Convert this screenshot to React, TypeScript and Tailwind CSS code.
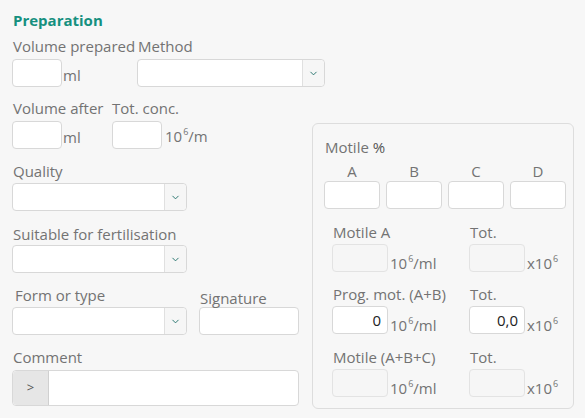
import { ChevronDown } from 'lucide-react'

const font = { fontFamily: '"Open Sans", "Liberation Sans", sans-serif' }

function TextInput({ className = '', value = '', disabled = false }: { className?: string; value?: string; disabled?: boolean }) {
  return (
    <div
      className={`h-[28px] rounded-[4px] border flex items-center justify-end pr-[6px] text-[15px] text-[#222] ${
        disabled ? 'bg-[#f6f6f6] border-[#e3e3e3]' : 'bg-white border-[#d8d8d8]'
      } ${className}`}
    >
      {value}
    </div>
  )
}

function Select({ className = '' }: { className?: string }) {
  return (
    <div className={`h-[28px] rounded-[4px] border border-[#d8d8d8] bg-white flex ${className}`}>
      <div className="flex-1" />
      <div className="w-[22px] border-l border-[#e0e0e0] bg-[#f6f6f6] rounded-r-[4px] flex items-center justify-center">
        <ChevronDown className="w-[11px] h-[11px] text-[#1f6f68]" strokeWidth={2} />
      </div>
    </div>
  )
}

function Label({ children, className = '' }: { children: React.ReactNode; className?: string }) {
  return <div className={`text-[15px] leading-[20px] text-[#737373] ${className}`}>{children}</div>
}

function Six() {
  return <sup className="text-[9px] relative top-[-7px] ml-[1px]">6</sup>
}

function CalcRow({ label, left = '', right = '', disabled = true, mt }: { label: string; left?: string; right?: string; disabled?: boolean; mt: string }) {
  return (
    <div className={`flex ${mt}`}>
      <div className="w-[156px] pl-[19px]">
        <Label className="pl-[1px]">{label}</Label>
        <div className="flex items-end mt-[2px]">
          <TextInput className="w-[56px]" value={left} disabled={disabled} />
          <span className="text-[15px] leading-[20px] text-[#737373] ml-[2px] mb-[-1px]">
            10<Six />/ml
          </span>
        </div>
      </div>
      <div>
        <Label className="ml-[1px]">Tot.</Label>
        <div className="flex items-end mt-[2px]">
          <TextInput className="w-[56px]" value={right} disabled={disabled} />
          <span className="text-[15px] leading-[20px] text-[#737373] ml-[2px] mb-[-1px]">
            x10<Six />
          </span>
        </div>
      </div>
    </div>
  )
}

export default function App() {
  return (
    <div className="w-[585px] h-[418px] bg-[#f7f7f7] pl-[12px] overflow-hidden" style={font}>
      <div className="pt-[10px] pl-[1px] text-[15px] leading-[20px] font-bold text-[#16907f]">Preparation</div>

      {/* volume + method */}
      <div className="flex mt-[6px]">
        <div className="w-[125px]">
          <Label className="pl-[1px] whitespace-nowrap">Volume prepared</Label>
          <div className="flex items-center mt-[3px]">
            <TextInput className="w-[50px]" />
            <span className="text-[15px] leading-[20px] text-[#737373] ml-[1px] mt-[3px]">ml</span>
          </div>
        </div>
        <div>
          <Label className="pl-[1px]">Method</Label>
          <Select className="w-[188px] mt-[3px]" />
        </div>
      </div>

      <div className="flex mt-[11px]">
        {/* left column */}
        <div className="w-[300px]">
          <div className="flex">
            <div className="w-[100px]">
              <Label className="pl-[1px]">Volume after</Label>
              <div className="flex items-center mt-[3px]">
                <TextInput className="w-[50px]" />
                <span className="text-[15px] leading-[20px] text-[#737373] ml-[1px] mt-[3px]">ml</span>
              </div>
            </div>
            <div>
              <Label>Tot. conc.</Label>
              <div className="flex items-center mt-[3px]">
                <TextInput className="w-[50px]" />
                <span className="text-[15px] leading-[20px] text-[#737373] ml-[3px] mt-[1px]">
                  10<Six />/m
                </span>
              </div>
            </div>
          </div>

          <Label className="mt-[12px] pl-[1px]">Quality</Label>
          <Select className="w-[175px] mt-[2px]" />

          <Label className="mt-[13px] pl-[1px]">Suitable for fertilisation</Label>
          <Select className="w-[175px] mt-[1px]" />

          <div className="flex mt-[12px]">
            <div className="w-[187px]">
              <Label className="pl-[3px]">Form or type</Label>
              <Select className="w-[175px] mt-[2px]" />
            </div>
            <div>
              <Label className="pl-[1px] mt-[3px]">Signature</Label>
              <TextInput className="w-[100px] mt-[-1px]" />
            </div>
          </div>

          <Label className="mt-[12px] pl-[1px]">Comment</Label>
          <div className="mt-[3px] h-[36px] w-[287px] flex rounded-[4px] border border-[#d8d8d8] bg-white">
            <div className="w-[36px] bg-[#e6e6e6] rounded-l-[4px] border-r border-[#d0d0d0] flex items-center justify-center text-[13px] text-[#555]">
              &gt;
            </div>
            <div className="flex-1" />
          </div>
        </div>

        {/* motility panel */}
        <div className="mt-[25px] w-[262px] h-[286px] border border-[#dddddd] rounded-[6px] pt-[13px]">
          <Label className="pl-[12px]">
            Motile <span className="text-[#555]">%</span>
          </Label>
          <div className="flex gap-[6px] pl-[11px] mt-[4px]">
            {['A', 'B', 'C', 'D'].map((l) => (
              <div key={l} className="w-[56px]">
                <Label className="text-center">{l}</Label>
                <TextInput className="w-[56px]" />
              </div>
            ))}
          </div>
          <CalcRow label="Motile A" mt="mt-[13px]" />
          <CalcRow label="Prog. mot. (A+B)" left="0" right="0,0" disabled={false} mt="mt-[12px]" />
          <CalcRow label="Motile (A+B+C)" mt="mt-[13px]" />
        </div>
      </div>
    </div>
  )
}
